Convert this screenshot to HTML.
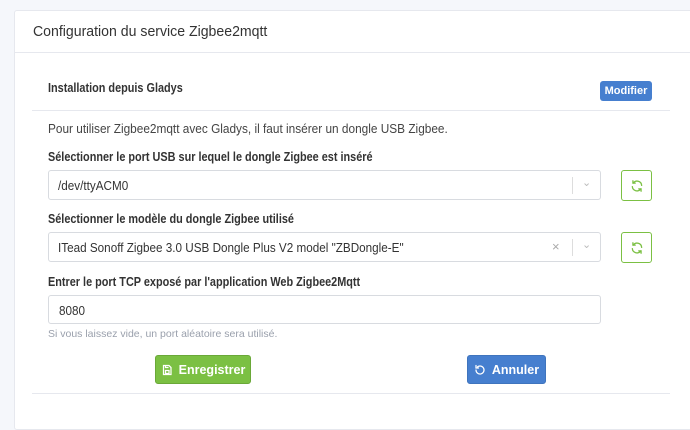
<!DOCTYPE html>
<html><head><meta charset="utf-8"><style>
*{box-sizing:border-box;margin:0;padding:0}
body{width:690px;height:404px;overflow:hidden;background:#f5f7fb;font-family:"Liberation Sans",sans-serif;color:#495057;position:relative}
.card{position:absolute;left:14px;top:10px;width:690px;height:420px;background:#fff;border:1px solid #e6e8ee;border-radius:3px}
.abs{position:absolute;transform-origin:0 0;white-space:nowrap}
.lbl{font-size:12.5px;font-weight:bold;color:#333;transform:scaleX(0.87)}
.sel{position:absolute;left:48px;width:553px;height:30px;border:1px solid #d8dbe0;border-radius:3px;background:#fff;font-size:13px;color:#333;padding:7px 9px}
.sel .t{display:inline-block;transform:scaleX(0.9);transform-origin:0 0;white-space:nowrap}
.rf{position:absolute;left:621px;width:31px;height:31px;border:1px solid #7bc043;border-radius:3px;background:#fff}
.btn{position:absolute;top:355px;height:29px;border-radius:3px;color:#fff;font-size:12.5px;font-weight:bold;display:flex;align-items:center;justify-content:center;gap:6px}
</style></head><body>
<div class="card"></div>
<div class="abs" style="left:33px;top:23px;font-size:15px;color:#333;transform:scaleX(0.94)">Configuration du service Zigbee2mqtt</div>
<div class="abs" style="left:14px;top:52px;width:676px;height:1px;background:#e6e8ee"></div>
<div class="abs lbl" style="left:48px;top:81px">Installation depuis Gladys</div>
<div class="abs" style="left:600px;top:81px;width:52px;height:20px;background:#467fcf;border-radius:3px;color:#fff;font-size:11px;font-weight:bold;text-align:center;line-height:20px">Modifier</div>
<div class="abs" style="left:32px;top:110px;width:638px;height:1px;background:#e6e8ee"></div>
<div class="abs" style="left:48px;top:121px;font-size:13px;color:#444;transform:scaleX(0.91)">Pour utiliser Zigbee2mqtt avec Gladys, il faut insérer un dongle USB Zigbee.</div>
<div class="abs lbl" style="left:48px;top:150px">Sélectionner le port USB sur lequel le dongle Zigbee est inséré</div>
<div class="sel" style="top:170px"><span class="t">/dev/ttyACM0</span><span class="abs" style="left:523px;top:6px;width:1px;height:17px;background:#ddd"></span><span class="abs" style="left:533px;top:5px;color:#bbb;font-size:11px">⌄</span></div>
<div class="rf" style="top:170px"><svg class="abs" style="left:8px;top:8px" width="14" height="14" viewBox="0 0 24 24" fill="none" stroke="#7bc043" stroke-width="2.2" stroke-linecap="round"><path d="M20 11A8 8 0 0 0 5.5 7M4 13a8 8 0 0 0 14.5 4"/><path d="M5 3v4h4M19 21v-4h-4"/></svg></div>
<div class="abs lbl" style="left:48px;top:212px">Sélectionner le modèle du dongle Zigbee utilisé</div>
<div class="sel" style="top:232px"><span class="t">ITead Sonoff Zigbee 3.0 USB Dongle Plus V2 model "ZBDongle-E"</span><span class="abs" style="left:503px;top:6px;color:#aaa;font-size:13px">×</span><span class="abs" style="left:523px;top:6px;width:1px;height:17px;background:#ddd"></span><span class="abs" style="left:533px;top:5px;color:#bbb;font-size:11px">⌄</span></div>
<div class="rf" style="top:232px"><svg class="abs" style="left:8px;top:8px" width="14" height="14" viewBox="0 0 24 24" fill="none" stroke="#7bc043" stroke-width="2.2" stroke-linecap="round"><path d="M20 11A8 8 0 0 0 5.5 7M4 13a8 8 0 0 0 14.5 4"/><path d="M5 3v4h4M19 21v-4h-4"/></svg></div>
<div class="abs lbl" style="left:48px;top:275px">Entrer le port TCP exposé par l'application Web Zigbee2Mqtt</div>
<div class="sel" style="top:295px;height:29px;padding-left:10px"><span class="t">8080</span></div>
<div class="abs" style="left:48px;top:328px;font-size:10.5px;color:#9aa0ac">Si vous laissez vide, un port aléatoire sera utilisé.</div>
<div class="btn" style="left:155px;width:96px;background:#7bc043;border:1px solid #6aa838"><svg width="12" height="12" viewBox="0 0 24 24" fill="none" stroke="#fff" stroke-width="2.5"><path d="M5 3h11l4 4v14H5z"/><rect x="9" y="13" width="7" height="6"/><path d="M9 3v4h6"/></svg>Enregistrer</div>
<div class="btn" style="left:467px;width:79px;background:#467fcf;border:1px solid #3f74bd"><svg width="12" height="12" viewBox="0 0 24 24" fill="none" stroke="#fff" stroke-width="2.5" stroke-linecap="round"><path d="M4 12a8 8 0 1 0 3-6.2"/><path d="M4 3v5h5"/></svg>Annuler</div>
<div class="abs" style="left:32px;top:393px;width:638px;height:1px;background:#e6e8ee"></div>
</body></html>
